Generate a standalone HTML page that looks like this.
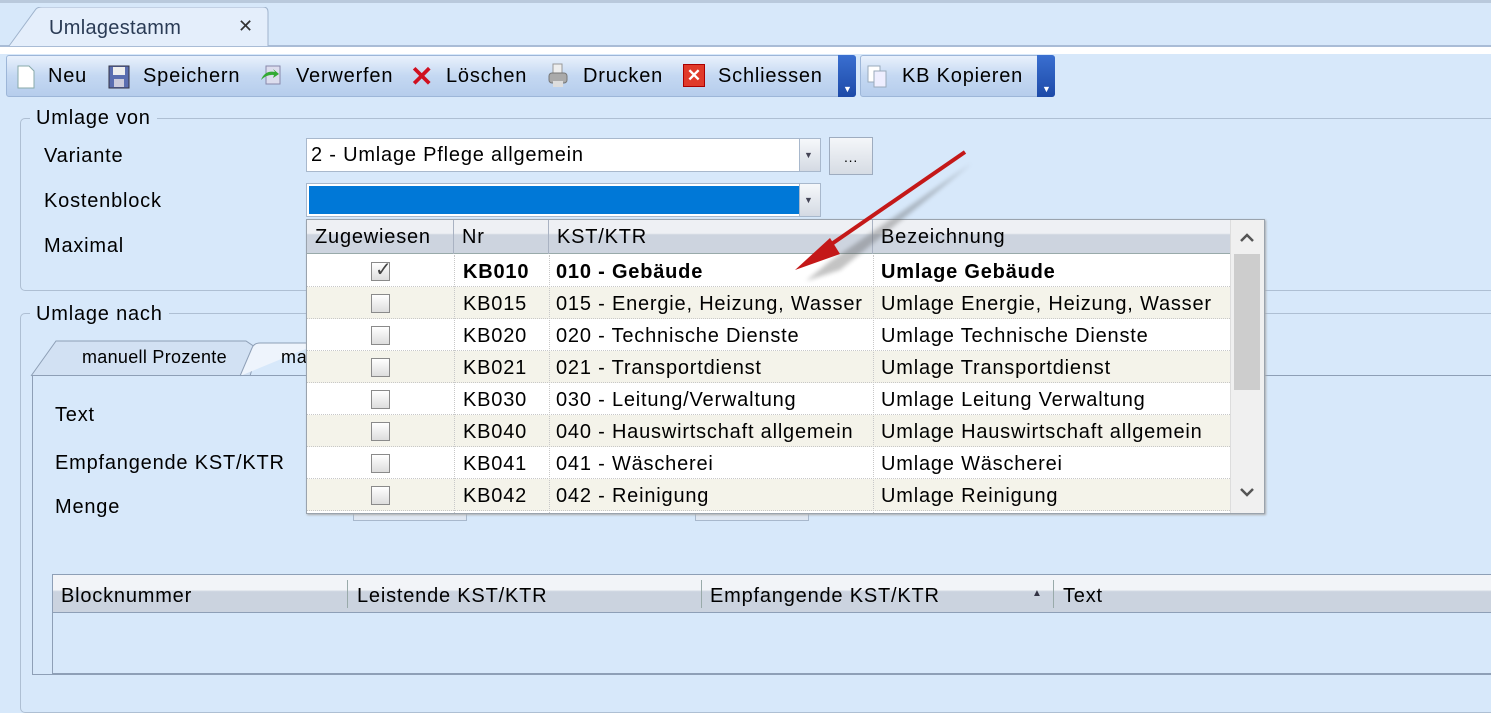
<!DOCTYPE html>
<html><head><meta charset="utf-8"><style>
*{box-sizing:border-box;margin:0;padding:0}
body{width:1491px;height:664px;overflow:hidden;background:#d7e8fa;font-family:"Liberation Sans",Arial,sans-serif;font-size:20px;letter-spacing:0.8px;color:#000;position:relative}
.a{position:absolute}
.row{position:absolute;left:0;width:923px;height:32px;border-bottom:1px dotted #c8c8c8}
.row div{position:absolute;top:6px}
.cb{position:absolute;left:64px;top:7px!important;width:19px;height:19px;border:1px solid #8a8a8a;background:linear-gradient(#fff,#ddd)}
.hd{position:absolute;top:0;height:34px;border-right:1px solid #a9b2c2;padding:6px 8px}
</style></head><body>
<div class="a" style="left:0;top:0;width:1491px;height:3px;background:#b9c9dc"></div>
<div class="a" style="left:0;top:45px;width:1491px;height:2px;background:#a9bcd6"></div>
<div class="a" style="left:0;top:47px;width:1491px;height:7px;background:#fff"></div>
<svg class="a" style="left:8px;top:7px" width="262" height="40"><path d="M1 39 L28 2 Q30 0 34 0 L255 0 Q260 0 260 5 L260 39" fill="#e4eefb" stroke="#9fb3cc"/></svg>
<div class="a" style="left:49px;top:17px;font-size:20px;color:#2a3b55;letter-spacing:0.3px">Umlagestamm</div>
<div class="a" style="left:238px;top:16px;font-size:18px;color:#333">✕</div>
<div class="a" style="left:6px;top:55px;width:850px;height:42px;background:linear-gradient(#e9f1fc,#c4d8f2 50%,#b6cdec);border:1px solid #9db6d8;border-radius:3px"></div>
<div class="a" style="left:838px;top:55px;width:18px;height:42px;background:linear-gradient(#3a6fd0,#1d4aa8);border-radius:0 3px 3px 0"></div>
<div class="a" style="left:860px;top:55px;width:195px;height:42px;background:linear-gradient(#e9f1fc,#c4d8f2 50%,#b6cdec);border:1px solid #9db6d8;border-radius:3px"></div>
<div class="a" style="left:1037px;top:55px;width:18px;height:42px;background:linear-gradient(#3a6fd0,#1d4aa8);border-radius:0 3px 3px 0"></div>
<div class="a" style="left:843px;top:84px;color:#fff;font-size:9px">▼</div>
<div class="a" style="left:1042px;top:84px;color:#fff;font-size:9px">▼</div>
<svg class="a" style="left:16px;top:65px" width="20" height="24"><path d="M2 1h11l5 5v17H2z" fill="#fff" stroke="#8aa"/></svg>
<div class="a" style="left:48px;top:65px">Neu</div>
<svg class="a" style="left:108px;top:65px" width="22" height="24"><rect x="1" y="1" width="20" height="22" fill="#5b6eb0" stroke="#334"/><rect x="5" y="2" width="12" height="8" fill="#eee"/><rect x="6" y="14" width="10" height="8" fill="#ccd"/></svg>
<div class="a" style="left:143px;top:65px">Speichern</div>
<svg class="a" style="left:258px;top:64px" width="26" height="24"><rect x="8" y="2" width="14" height="18" fill="#dde" stroke="#88a"/><path d="M3 16 q4 -10 14 -8 l-2 -3 l6 5 l-6 4 l1-3 q-7-1-13 5z" fill="#3a3"/></svg>
<div class="a" style="left:296px;top:65px">Verwerfen</div>
<div class="a" style="left:410px;top:60px;color:#d01020;font-size:28px;font-weight:bold">✕</div>
<div class="a" style="left:446px;top:65px">Löschen</div>
<svg class="a" style="left:546px;top:63px" width="24" height="26"><rect x="7" y="1" width="9" height="10" fill="#eee" stroke="#999"/><rect x="3" y="10" width="18" height="10" rx="3" fill="#aaa" stroke="#777"/><rect x="7" y="18" width="10" height="6" fill="#ddd"/></svg>
<div class="a" style="left:583px;top:65px">Drucken</div>
<div class="a" style="left:683px;top:64px;width:22px;height:23px;background:#e03a2a;border:1px solid #a00;color:#fff;font-size:17px;font-weight:bold;text-align:center;line-height:21px;letter-spacing:0">✕</div>
<div class="a" style="left:718px;top:65px">Schliessen</div>
<svg class="a" style="left:866px;top:64px" width="24" height="26"><rect x="2" y="2" width="12" height="16" fill="#fff" stroke="#9ab"/><rect x="8" y="7" width="12" height="16" fill="#eef" stroke="#9ab"/></svg>
<div class="a" style="left:902px;top:65px">KB Kopieren</div>
<div class="a" style="left:20px;top:118px;width:1480px;height:173px;border:1px solid #aebfd3;border-radius:5px"></div>
<div class="a" style="left:30px;top:107px;background:#d7e8fa;padding:0 6px">Umlage von</div>
<div class="a" style="left:44px;top:145px">Variante</div>
<div class="a" style="left:44px;top:190px">Kostenblock</div>
<div class="a" style="left:44px;top:235px">Maximal</div>
<div class="a" style="left:306px;top:138px;width:515px;height:34px;background:#fff;border:1px solid #a8b8cc"></div>
<div class="a" style="left:311px;top:144px">2 - Umlage Pflege allgemein</div>
<div class="a" style="left:799px;top:139px;width:21px;height:32px;background:linear-gradient(#f6f8fb,#d4dae3);border-left:1px solid #a8b8cc"></div>
<div class="a" style="left:804px;top:150px;font-size:9px;color:#445">▼</div>
<div class="a" style="left:829px;top:137px;width:44px;height:38px;background:linear-gradient(#f4f6f9,#d6dce4);border:1px solid #9eacbf;text-align:center;font-size:14px;line-height:38px">...</div>
<div class="a" style="left:306px;top:183px;width:515px;height:34px;background:#fff;border:1px solid #a8b8cc"></div>
<div class="a" style="left:309px;top:186px;width:490px;height:28px;background:#0078d7"></div>
<div class="a" style="left:799px;top:184px;width:21px;height:32px;background:linear-gradient(#f6f8fb,#d4dae3);border-left:1px solid #a8b8cc"></div>
<div class="a" style="left:804px;top:195px;font-size:9px;color:#445">▼</div>
<div class="a" style="left:20px;top:313px;width:1480px;height:400px;border:1px solid #aebfd3;border-radius:5px"></div>
<div class="a" style="left:30px;top:303px;background:#d7e8fa;padding:0 6px">Umlage nach</div>
<svg class="a" style="left:30px;top:340px" width="290" height="37"><path d="M1 36 L26 1 L216 1 L228 9 L220 36" fill="#d2e1f3" stroke="#8e9fb6"/><path d="M210 36 L222 8 Q224 3 230 3 L290 3" fill="#eef4fc" stroke="#8e9fb6"/></svg>
<div class="a" style="left:82px;top:347px;font-size:18px;letter-spacing:0.3px">manuell Prozente</div>
<div class="a" style="left:281px;top:347px;font-size:18px">ma</div>
<div class="a" style="left:32px;top:375px;width:1470px;height:300px;border:1px solid #8e9fb6;border-right:none"></div>
<div class="a" style="left:55px;top:404px">Text</div>
<div class="a" style="left:55px;top:452px">Empfangende KST/KTR</div>
<div class="a" style="left:55px;top:496px">Menge</div>
<div class="a" style="left:353px;top:505px;width:114px;height:16px;border:1px solid #a8b8cc;border-top:none;background:#dfe7f2"></div>
<div class="a" style="left:695px;top:505px;width:114px;height:16px;border:1px solid #a8b8cc;border-top:none;background:#dfe7f2"></div>
<div class="a" style="left:52px;top:574px;width:1450px;height:100px;border:1px solid #8e9fb6"></div>
<div class="a" style="left:53px;top:575px;width:1440px;height:38px;background:linear-gradient(#f2f4f8 40%,#cbd3df 45%,#cbd3df);border-bottom:1px solid #8e9fb6"></div>
<div class="a" style="left:61px;top:585px">Blocknummer</div>
<div class="a" style="left:347px;top:580px;width:1px;height:28px;background:#9aa"></div>
<div class="a" style="left:357px;top:585px">Leistende KST/KTR</div>
<div class="a" style="left:701px;top:580px;width:1px;height:28px;background:#9aa"></div>
<div class="a" style="left:710px;top:585px">Empfangende KST/KTR</div>
<div class="a" style="left:1032px;top:588px;font-size:10px;color:#334">▲</div>
<div class="a" style="left:1053px;top:580px;width:1px;height:28px;background:#9aa"></div>
<div class="a" style="left:1063px;top:585px">Text</div>
<div class="a" style="left:306px;top:219px;width:959px;height:295px;background:#fff;border:1px solid #9aa3ad;box-shadow:1px 1px 2px #aaa">
 <div class="a" style="left:0;top:0;width:923px;height:34px;background:linear-gradient(#eef0f4 40%,#cdd4df 45%,#cdd4df);border-bottom:1px solid #9aa"></div>
 <div class="hd" style="left:0;width:147px">Zugewiesen</div>
 <div class="hd" style="left:147px;width:95px">Nr</div>
 <div class="hd" style="left:242px;width:324px">KST/KTR</div>
 <div class="hd" style="left:566px;width:357px;border:none">Bezeichnung</div>
 <div class="a" style="left:923px;top:0;width:34px;height:293px;background:#f0f0f0;border-left:1px solid #ddd"></div>
 <div class="a" style="left:927px;top:34px;width:26px;height:136px;background:#cdcdcd"></div>
 <svg class="a" style="left:932px;top:12px" width="16" height="12"><path d="M2 9 L8 3 L14 9" fill="none" stroke="#555" stroke-width="2.5"/></svg>
 <svg class="a" style="left:932px;top:266px" width="16" height="12"><path d="M2 3 L8 9 L14 3" fill="none" stroke="#555" stroke-width="2.5"/></svg>
 <div style="position:absolute;left:0;top:35px;width:923px">
  <div class="row" style="top:0;background:#fff;font-weight:bold"><div class="cb"></div><div style="left:68px;top:2px;font-weight:normal;color:#444">✓</div><div style="left:156px">KB010</div><div style="left:249px">010 - Gebäude</div><div style="left:574px">Umlage Gebäude</div></div>
  <div class="row" style="top:32px;background:#f4f3ea"><div class="cb"></div><div style="left:156px">KB015</div><div style="left:249px">015 - Energie, Heizung, Wasser</div><div style="left:574px">Umlage Energie, Heizung, Wasser</div></div>
  <div class="row" style="top:64px;background:#fff"><div class="cb"></div><div style="left:156px">KB020</div><div style="left:249px">020 - Technische Dienste</div><div style="left:574px">Umlage Technische Dienste</div></div>
  <div class="row" style="top:96px;background:#f4f3ea"><div class="cb"></div><div style="left:156px">KB021</div><div style="left:249px">021 - Transportdienst</div><div style="left:574px">Umlage Transportdienst</div></div>
  <div class="row" style="top:128px;background:#fff"><div class="cb"></div><div style="left:156px">KB030</div><div style="left:249px">030 - Leitung/Verwaltung</div><div style="left:574px">Umlage Leitung Verwaltung</div></div>
  <div class="row" style="top:160px;background:#f4f3ea"><div class="cb"></div><div style="left:156px">KB040</div><div style="left:249px">040 - Hauswirtschaft allgemein</div><div style="left:574px">Umlage Hauswirtschaft allgemein</div></div>
  <div class="row" style="top:192px;background:#fff"><div class="cb"></div><div style="left:156px">KB041</div><div style="left:249px">041 - Wäscherei</div><div style="left:574px">Umlage Wäscherei</div></div>
  <div class="row" style="top:224px;background:#f4f3ea"><div class="cb"></div><div style="left:156px">KB042</div><div style="left:249px">042 - Reinigung</div><div style="left:574px">Umlage Reinigung</div></div>
  <div class="a" style="left:147px;top:0;width:1px;height:258px;border-left:1px dotted #c8c8c8"></div>
  <div class="a" style="left:242px;top:0;width:1px;height:258px;border-left:1px dotted #c8c8c8"></div>
  <div class="a" style="left:566px;top:0;width:1px;height:258px;border-left:1px dotted #c8c8c8"></div>
 </div>
</div>
<svg class="a" style="left:780px;top:140px" width="200" height="150">
<defs><filter id="b"><feGaussianBlur stdDeviation="2"/></filter></defs>
<path d="M188 17 L45 116 L22 135 L56 124 Z" fill="#555" opacity=".35" filter="url(#b)" transform="translate(4,6)"/>
<line x1="185" y1="12" x2="40" y2="112" stroke="#c41818" stroke-width="4"/>
<path d="M15 130 L50 98 L60 114 Z" fill="#c41818"/>
</svg>
</body></html>
